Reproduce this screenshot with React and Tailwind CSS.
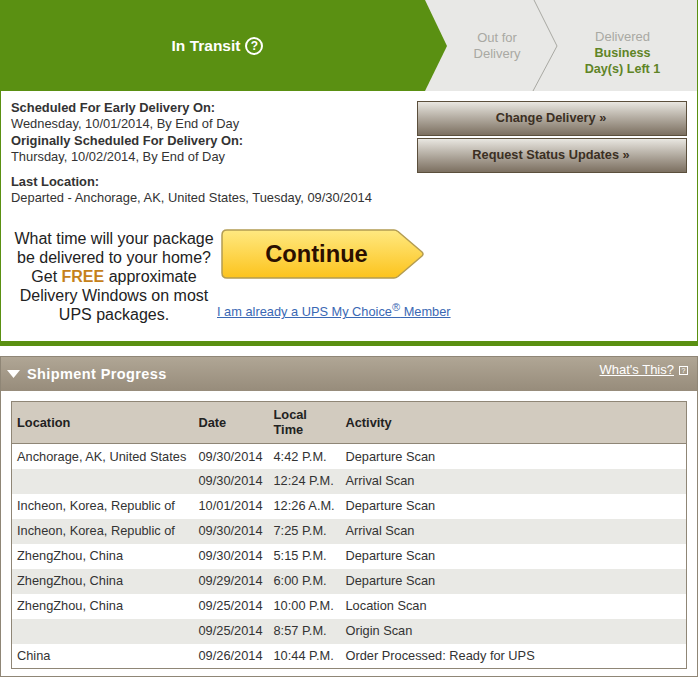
import React from 'react';

const rows = [
  ['Anchorage, AK, United States', '09/30/2014', '4:42 P.M.', 'Departure Scan'],
  ['', '09/30/2014', '12:24 P.M.', 'Arrival Scan'],
  ['Incheon, Korea, Republic of', '10/01/2014', '12:26 A.M.', 'Departure Scan'],
  ['Incheon, Korea, Republic of', '09/30/2014', '7:25 P.M.', 'Arrival Scan'],
  ['ZhengZhou, China', '09/30/2014', '5:15 P.M.', 'Departure Scan'],
  ['ZhengZhou, China', '09/29/2014', '6:00 P.M.', 'Departure Scan'],
  ['ZhengZhou, China', '09/25/2014', '10:00 P.M.', 'Location Scan'],
  ['', '09/25/2014', '8:57 P.M.', 'Origin Scan'],
  ['China', '09/26/2014', '10:44 P.M.', 'Order Processed: Ready for UPS'],
];

const StatusHeader = () => (
  <div className="relative flex h-[91px] bg-[#e8e8e6]">
    <svg className="absolute inset-0" width="696" height="91" viewBox="0 0 696 91">
      <polygon points="0,0 424,0 446,46 424,91 0,91" fill="#5a9012" />
      <polyline points="533,0 556,46 532,91" fill="none" stroke="#a8a8a2" strokeWidth="1" />
    </svg>
    <div className="relative flex w-[424px] items-center justify-center gap-[5px] pl-[9px] pt-[1px] text-[15.5px] font-bold text-white">
      In Transit
      <span className="flex h-[18px] w-[18px] items-center justify-center rounded-full border-2 border-white text-[12px] leading-none">?</span>
    </div>
    <div className="relative flex w-[114px] items-center justify-center pl-[30px] pt-[1px] text-center text-[13px] leading-[16px] text-[#a9a9a3]">
      Out for<br />Delivery
    </div>
    <div className="relative flex flex-1 flex-col items-center justify-center pl-[9px] pt-[15px] text-center text-[13px] leading-[16px] text-[#a9a9a3]">
      Delivered
      <span className="text-[12.6px] font-bold text-[#5f8426]">Business</span>
      <span className="text-[12.6px] font-bold text-[#5f8426]">Day(s) Left 1</span>
    </div>
  </div>
);

const ActionButton = ({ children }) => (
  <button className="h-[35px] w-[270px] border border-[#5b4f3c] bg-gradient-to-b from-[#e9e7e1] to-[#7c7061] pb-[2px] pr-[2px] text-[12.75px] font-bold text-[#3b2f23]">
    {children}
  </button>
);

const ContinueButton = () => (
  <div className="relative flex h-[50px] w-[204px] items-center justify-center pr-[13px]">
    <svg className="absolute inset-0" width="204" height="50" viewBox="0 0 204 50">
      <defs>
        <linearGradient id="continueFill" x1="0" y1="0" x2="0" y2="1">
          <stop offset="0" stopColor="#ffe981" />
          <stop offset="1" stopColor="#fcc31c" />
        </linearGradient>
      </defs>
      <path
        d="M6 1 H173 Q175 1 177 2.5 L201 23 Q203 25 201 27 L177 47.5 Q175 49 173 49 H6 Q1 49 1 44 V6 Q1 1 6 1 Z"
        fill="url(#continueFill)"
        stroke="#b39c52"
        strokeWidth="1.5"
      />
    </svg>
    <span className="relative text-[23.7px] font-bold text-[#2b0f00]">Continue</span>
  </div>
);

const ShipmentTable = () => (
  <table className="w-[676px] table-fixed border-collapse border border-[#8f8676] text-[12.8px] text-[#333]">
    <thead>
      <tr className="h-[42px] border-b border-[#8f8676] bg-[#d2cbbf] text-left font-bold text-[#222] leading-[15px]">
        <th className="w-[181px] pb-[1px] pl-[5px]">Location</th>
        <th className="w-[75px] pb-[1px] pl-[6px]">Date</th>
        <th className="w-[72px] pb-[1px] pl-[6px]">Local<br />Time</th>
        <th className="pb-[1px] pl-[6px]">Activity</th>
      </tr>
    </thead>
    <tbody>
      {rows.map((row, i) => (
        <tr key={i} className={`h-[25px] ${i % 2 === 1 ? 'bg-[#e9e9e5]' : 'bg-white'}`}>
          <td className="pl-[5px] whitespace-nowrap">{row[0]}</td>
          <td className="pl-[6px]">{row[1]}</td>
          <td className="pl-[6px] whitespace-nowrap">{row[2]}</td>
          <td className="pl-[6px]">{row[3]}</td>
        </tr>
      ))}
    </tbody>
  </table>
);

export default function App() {
  return (
    <div className="h-[677px] w-[699px] bg-white font-['Liberation_Sans',Arial,sans-serif] text-[12.9px] text-[#333]">
      <div className="h-[346px] w-[698px] border-x border-b-[5px] border-[#5a9012]">
        <StatusHeader />
        <div className="flex justify-between pl-[10px] pr-[9px] pt-[9px]">
          <div className="leading-[16.4px]">
            <div className="font-bold">Scheduled For Early Delivery On:</div>
            <div>Wednesday, 10/01/2014, By End of Day</div>
            <div className="font-bold">Originally Scheduled For Delivery On:</div>
            <div>Thursday, 10/02/2014, By End of Day</div>
            <div className="mt-[8px] font-bold">Last Location:</div>
            <div>Departed - Anchorage, AK, United States, Tuesday, 09/30/2014</div>
          </div>
          <div className="mt-[1px] flex flex-col gap-[2px] pr-[1px]">
            <ActionButton>Change Delivery »</ActionButton>
            <ActionButton>Request Status Updates »</ActionButton>
          </div>
        </div>
        <div className="mt-[23px] flex">
          <div className="ml-[10px] w-[206px] text-center text-[16px] leading-[19px] text-[#222]">
            <div>What time will your package</div>
            <div>be delivered to your home?</div>
            <div>Get <span className="font-bold text-[#c5811b]">FREE</span> approximate</div>
            <div>Delivery Windows on most</div>
            <div>UPS packages.</div>
          </div>
          <div className="ml-[4px] flex flex-col">
            <ContinueButton />
            <a href="#" className="mt-[23px] -ml-[4px] text-[12.8px] text-[#3a68b4] underline">
              I am already a UPS My Choice<sup className="text-[11px]">®</sup> Member
            </a>
          </div>
        </div>
      </div>
      <div className="mt-[10px] h-[321px] w-[698px] border border-[#8f8676]">
        <div className="flex h-[34px] items-start bg-gradient-to-b from-[#b0a695] to-[#978c7b] pl-[6px] pr-[9px] text-white">
          <svg className="mt-[13px]" width="13" height="8" viewBox="0 0 13 8">
            <polygon points="0,0 13,0 6.5,8" fill="#fff" />
          </svg>
          <span className="ml-[7px] mt-[7px] text-[14.5px] font-bold tracking-[0.4px]">Shipment Progress</span>
          <a href="#" className="ml-auto mt-[3px] text-[13px] underline">What's This?</a>
          <span className="ml-[5px] mt-[9px] flex h-[9px] w-[9px] items-center justify-center border border-white text-[7px] leading-none">?</span>
        </div>
        <div className="pl-[10px] pt-[10px]">
          <ShipmentTable />
        </div>
      </div>
    </div>
  );
}
